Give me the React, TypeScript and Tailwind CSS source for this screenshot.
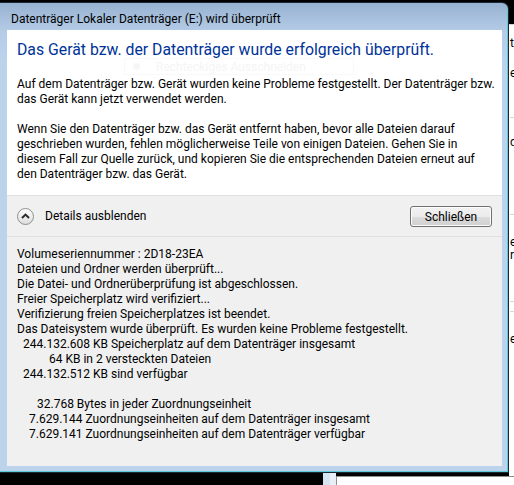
import React from 'react';

const font = { fontFamily: 'Roboto, "Noto Sans", sans-serif' };

function ExpandoIcon() {
  return (
    <svg width="19" height="19" viewBox="0 0 19 19">
      <defs>
        <linearGradient id="exp" x1="0" y1="0" x2="0" y2="1">
          <stop offset="0" stopColor="#ffffff" />
          <stop offset="1" stopColor="#dcdcdc" />
        </linearGradient>
      </defs>
      <circle cx="9.5" cy="9.5" r="8" fill="url(#exp)" stroke="#8e8f8f" />
      <path d="M6 11 L9.5 7.6 L13 11" fill="none" stroke="#2b2b2b" strokeWidth="2" />
    </svg>
  );
}

const details: { text: string; pad: string }[] = [
  { text: 'Volumeseriennummer : 2D18-23EA', pad: 'pl-0' },
  { text: 'Dateien und Ordner werden überprüft...', pad: 'pl-0' },
  { text: 'Die Datei- und Ordnerüberprüfung ist abgeschlossen.', pad: 'pl-0' },
  { text: 'Freier Speicherplatz wird verifiziert...', pad: 'pl-0' },
  { text: 'Verifizierung freien Speicherplatzes ist beendet.', pad: 'pl-0' },
  { text: 'Das Dateisystem wurde überprüft. Es wurden keine Probleme festgestellt.', pad: 'pl-0' },
  { text: '244.132.608 KB Speicherplatz auf dem Datenträger insgesamt', pad: 'pl-[6px]' },
  { text: '64 KB in 2 versteckten Dateien', pad: 'pl-[32px]' },
  { text: '244.132.512 KB sind verfügbar', pad: 'pl-[6px]' },
  { text: '', pad: 'pl-0' },
  { text: '32.768 Bytes in jeder Zuordnungseinheit', pad: 'pl-[20px]' },
  { text: '7.629.144 Zuordnungseinheiten auf dem Datenträger insgesamt', pad: 'pl-[12px]' },
  { text: '7.629.141 Zuordnungseinheiten auf dem Datenträger verfügbar', pad: 'pl-[12px]' },
];

export default function App() {
  return (
    <div className="relative w-[514px] h-[485px] overflow-hidden bg-black" style={font}>
      {/* Fenster im Hintergrund rechts */}
      <div className="absolute left-[509px] top-[24px] w-[30px] h-[470px] flex flex-col pl-[1px] bg-white border-t border-[#d4d4d4] text-[12px] leading-[12px] text-black">
        <div className="mt-[12px]">te</div>
        <div className="mt-[18px]">er</div>
        <div className="mt-[38px] h-px bg-[#d8d8d8]" />
        <div className="mt-[18px]">da</div>
        <div className="mt-[66px] h-px bg-[#d8d8d8]" />
        <div className="mt-[21px]">e</div>
        <div className="mt-[1px]">r</div>
        <div className="mt-[40px] h-px bg-[#d8d8d8]" />
        <div className="mt-[9px] h-px bg-[#d8d8d8]" />
        <div className="mt-[21px]">e</div>
      </div>

      {/* Fenster im Hintergrund unten */}
      <div className="absolute left-[323px] top-[473px] w-[200px] h-[20px] flex">
        <div className="w-[7px] bg-[#d6e3f1]" />
        <div className="w-[6px] bg-[#e9eff7]" />
        <div className="flex-1 mt-[3px] bg-white border-l border-t border-[#8f8f8f]" />
      </div>

      {/* Dialog */}
      <div className="absolute left-0 top-[2px] w-[509px] h-[471px] flex flex-col rounded-tr-[7px] border-t border-r border-b border-[#1c2a33] shadow-[inset_-1px_-1px_0_#5fc9dc] bg-[linear-gradient(180deg,#97b2d2_0px,#b6cde7_30px,#bdd3ec_60px,#bdd3ec_100%)]">
        <div className="h-[27px] pl-[11px] pt-[9px] text-[12px] leading-[15px] text-black whitespace-nowrap">
          Datenträger Lokaler Datenträger (E:) wird überprüft
        </div>

        <div className="ml-[7px] mr-[6px] h-[436px] flex flex-col bg-[#f0f0f0]">
          {/* Inhalt */}
          <div className="relative h-[166px] bg-white border-b border-[#dfdfdf] pl-[10px] pt-[9px] text-black">
            <div className="text-[15.8px] leading-[21px] text-[#003399] whitespace-nowrap">
              Das Gerät bzw. der Datenträger wurde erfolgreich überprüft.
            </div>
            <p className="mt-[17px] text-[12px] leading-[15px] whitespace-nowrap">
              Auf dem Datenträger bzw. Gerät wurden keine Probleme festgestellt. Der Datenträger bzw.
              <br />
              das Gerät kann jetzt verwendet werden.
            </p>
            <p className="mt-[15px] text-[12px] leading-[15px] whitespace-nowrap">
              Wenn Sie den Datenträger bzw. das Gerät entfernt haben, bevor alle Dateien darauf
              <br />
              geschrieben wurden, fehlen möglicherweise Teile von einigen Dateien. Gehen Sie in
              <br />
              diesem Fall zur Quelle zurück, und kopieren Sie die entsprechenden Dateien erneut auf
              <br />
              den Datenträger bzw. das Gerät.
            </p>

            {/* Durchscheinendes Menü */}
            <div className="absolute left-[117px] top-[28px] w-[230px] h-[17px] flex items-center border border-[#f9f9f9] pointer-events-none">
              <span className="ml-[8px] w-[7px] h-[7px] rounded-full bg-[#f6f6f6]" />
              <span className="ml-[16px] text-[12px] text-[#f5f5f5]">Rechteckiges Ausschneiden</span>
            </div>
          </div>

          {/* Leiste */}
          <div className="h-[41px] flex items-center border-b border-[#dfdfdf] pl-[9px] pr-[10px]">
            <ExpandoIcon />
            <span className="ml-[10px] text-[12px] text-black">Details ausblenden</span>
            <button className="ml-auto w-[82px] h-[21px] mt-[1px] rounded-[3px] border border-[#707070] text-[12px] text-black bg-[linear-gradient(180deg,#f2f2f2_0%,#ebebeb_50%,#dddddd_50%,#cfcfcf_100%)] shadow-[inset_0_0_0_1px_#fcfcfc]">
              Schließen
            </button>
          </div>

          {/* Details */}
          <div className="flex-1 pl-[10px] pt-[10px] text-[12px] leading-[15px] text-black">
            {details.map((d, i) => (
              <div key={i} className={`h-[15px] whitespace-nowrap ${d.pad}`}>
                {d.text}
              </div>
            ))}
          </div>
        </div>
      </div>
    </div>
  );
}
